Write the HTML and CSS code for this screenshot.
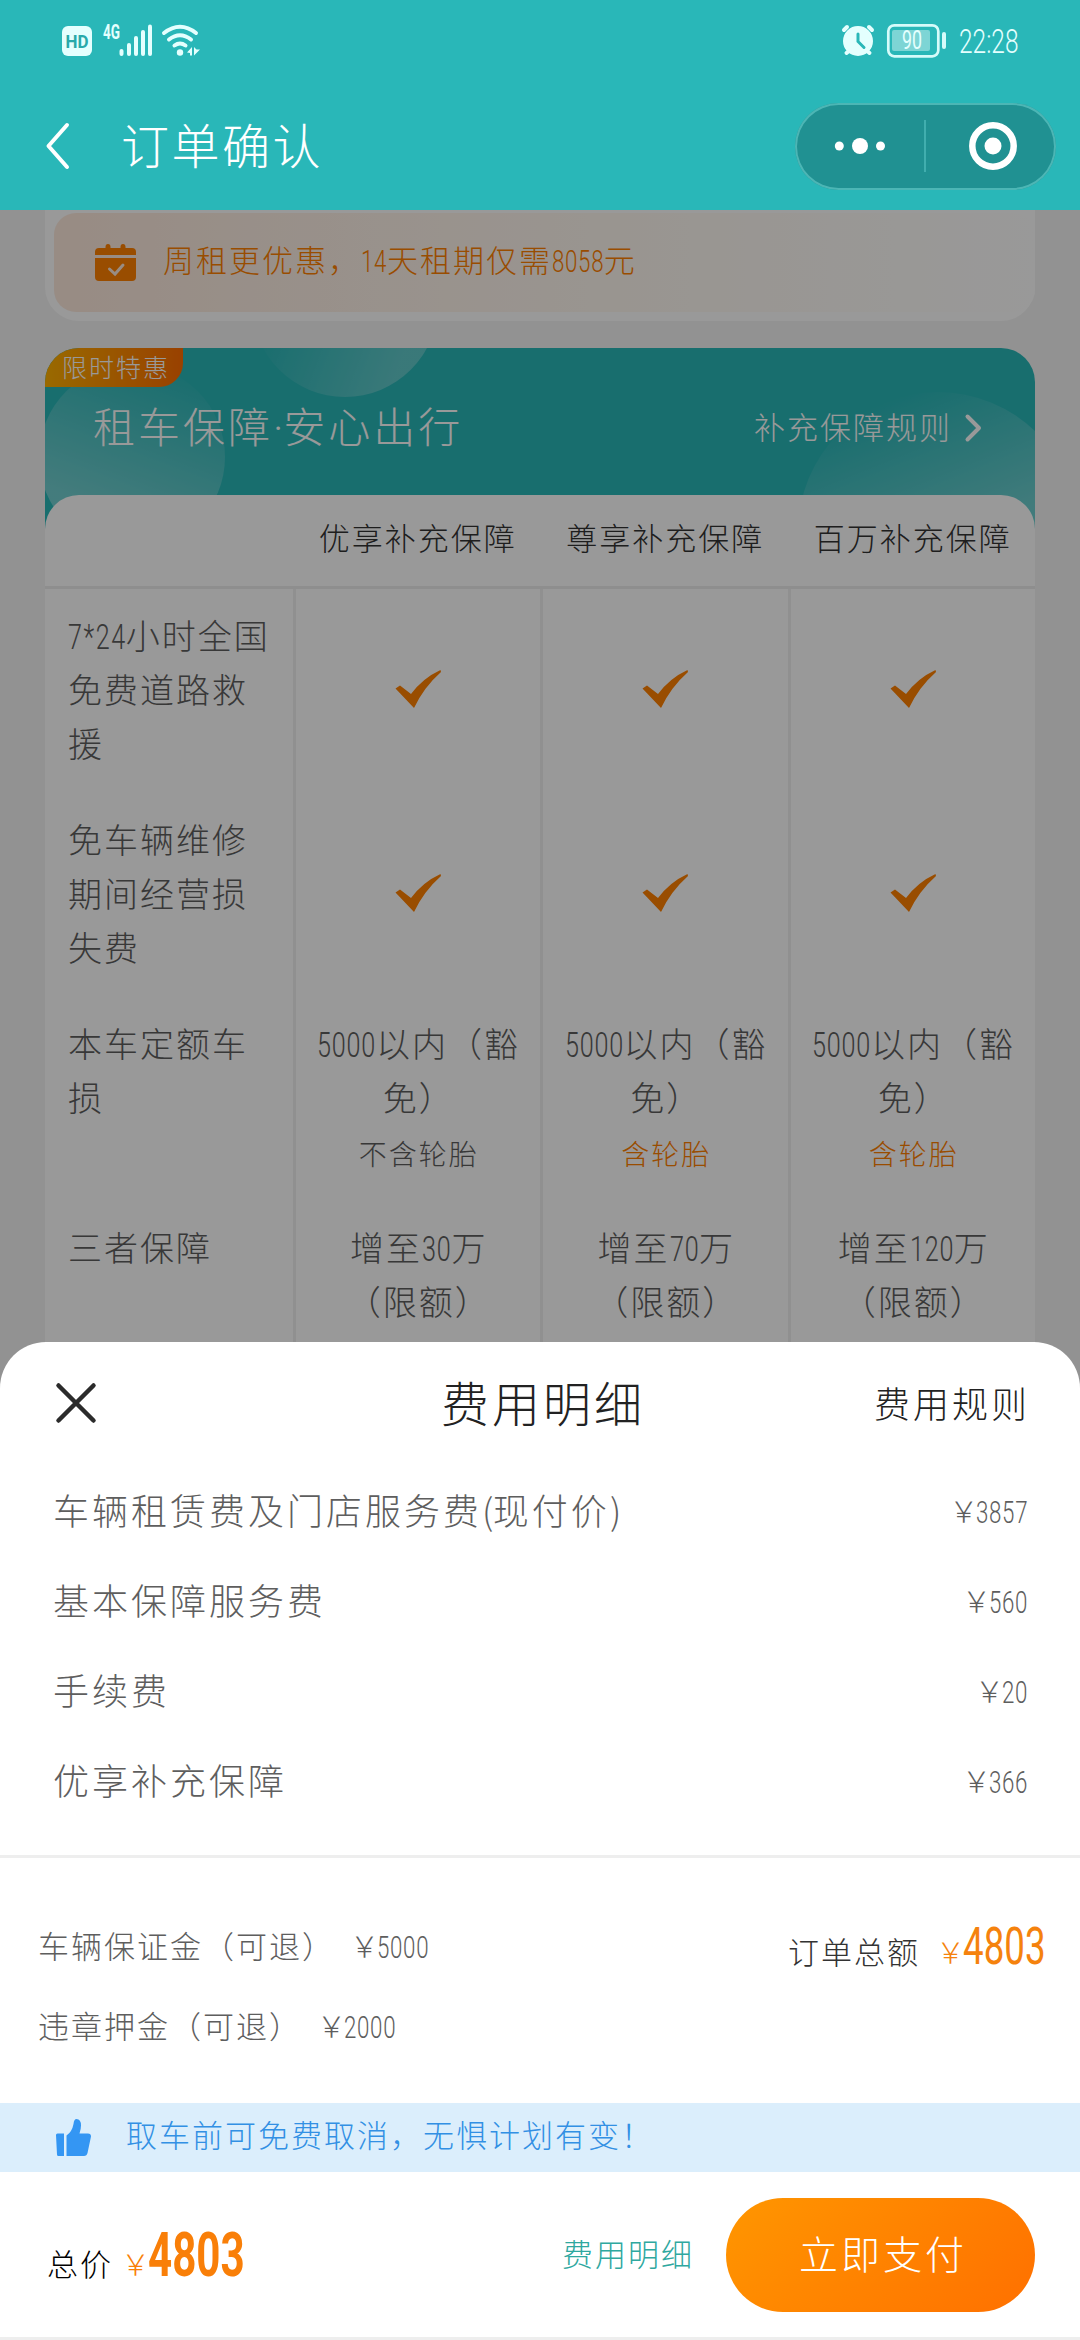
FILE: index.html
```html
<!DOCTYPE html>
<html lang="zh-CN">
<head>
<meta charset="utf-8">
<title>订单确认</title>
<link rel="stylesheet" href="styles.css">
</head>
<body>
<svg class="defs" width="0" height="0">
  <symbol id="tick" viewBox="0 0 46 38"><path d="M.5 18.500 5 15.500 16 24Q28 8 45.500 0L46 2Q29 17 19 38Z" fill="#ff8000"/></symbol>
</svg>
<div class="screen">
  <header class="top">
    <div class="status">
      <svg class="status-left" width="140" height="36" viewBox="60 22 140 36" fill="#e4fffe">
        <rect x="62" y="26" width="30" height="30" rx="6"/>
        <text x="65.500" y="48" class="hd" textLength="23" lengthAdjust="spacingAndGlyphs">HD</text>
        <text x="103" y="38.500" class="net" textLength="17" lengthAdjust="spacingAndGlyphs">4G</text>
        <rect x="119.500" y="49" width="4" height="7" rx="2"/>
        <rect x="127" y="43" width="4" height="13" rx="2"/>
        <rect x="134" y="36" width="4" height="20" rx="2"/>
        <rect x="141" y="30" width="4" height="26" rx="2"/>
        <rect x="148" y="24.500" width="4" height="31.500" rx="2"/>
        <g fill="none" stroke="#e4fffe" stroke-width="4" stroke-linecap="round">
          <path d="M164 33Q180 20.500 196 33M169 39.500Q180 31 191 39.500M174.500 45.500Q180 41.500 185.500 45.500"/>
        </g>
        <circle cx="180" cy="52.500" r="3.200"/>
        <path d="M187 52.500 192 47v8.500h-2V53zM194 47v8.500l6-6h-3.500z"/>
      </svg>
      <div class="status-right">
        <svg width="106" height="36" viewBox="838 22 106 36">
          <g fill="#e4fffe" stroke="#e4fffe" stroke-width="5" stroke-linecap="round">
            <circle cx="855" cy="41" r="12.500"/>
            <path d="M841 30 844 27M869 30 866 27M843.500 53 847 50M866.500 53 863 50" stroke-width="4"/>
          </g>
          <path d="M855 34v7.500l6 6" fill="none" stroke="#29b7b8" stroke-width="3" stroke-linecap="round"/>
          <rect x="885.300" y="25.300" width="50" height="31" rx="6" fill="none" stroke="#d5fbfa" stroke-width="2.700"/>
          <rect x="889" y="30" width="38" height="21" rx="2" fill="#7dd5d5"/>
          <rect x="939" y="32" width="4" height="17" rx="2" fill="#d5fbfa"/>
          <text x="899" y="49" class="bat" textLength="20" lengthAdjust="spacingAndGlyphs">90</text>
        </svg>
        <span class="time num n5">22:28</span>
      </div>
    </div>
    <div class="nav">
      <svg class="back" width="24" height="46" viewBox="0 0 24 46"><path d="M21 2 2.500 23 21 44" fill="none" stroke="#fff" stroke-width="4" stroke-linecap="round" stroke-linejoin="round"/></svg>
      <h1>订单确认</h1>
      <div class="capsule">
        <svg width="260" height="86" viewBox="795 103 260 86" fill="#fff">
          <circle cx="839.300" cy="146" r="4.500"/><circle cx="860" cy="146" r="8"/><circle cx="880.500" cy="146" r="4.500"/>
          <path d="M925 120v52" stroke="#4cb9b7" stroke-width="1.500"/>
          <circle cx="993" cy="146" r="20.700" fill="none" stroke="#fff" stroke-width="6.500"/>
          <circle cx="993" cy="146" r="8.500"/>
        </svg>
      </div>
    </div>
  </header>

  <main class="content">
    <section class="promo">
      <div class="promo-in">
        <svg width="41" height="38" viewBox="0 0 41 38"><path d="M0 11V8q0-4 4-4h6.500V3q0-3 2.500-3t2.500 3v1h10V3q0-3 2.500-3t2.500 3v1H37q4 0 4 4v3zM0 14h41v19q0 4-4 4H4q-4 0-4-4z" fill="#ff8000"/><path d="m14.500 25 5.500 5 8-9" fill="none" stroke="#fdeadb" stroke-width="3" stroke-linecap="round"/></svg>
        <p>周租更优惠，<span class="num n2">14</span>天租期仅需<span class="num n4">8058</span>元</p>
      </div>
    </section>

    <section class="cover">
      <svg class="bubbles" width="990" height="190" viewBox="45 348 990 190">
        <defs>
          <linearGradient id="b1" x1=".7" y1="0" x2=".4" y2=".8"><stop offset="0" stop-color="#fff" stop-opacity="0"/><stop offset="1" stop-color="#fff" stop-opacity=".34"/></linearGradient>
          <linearGradient id="b2" x1="0" y1=".5" x2=".8" y2=".8"><stop offset=".1" stop-color="#fff" stop-opacity="0"/><stop offset="1" stop-color="#fff" stop-opacity=".26"/></linearGradient>
          <linearGradient id="b3" x1=".4" y1="0" x2=".6" y2=".5"><stop offset="0" stop-color="#fff" stop-opacity="0"/><stop offset="1" stop-color="#fff" stop-opacity=".32"/></linearGradient>
        </defs>
        <circle cx="132" cy="457" r="93" fill="url(#b1)"/>
        <circle cx="345" cy="304" r="93" fill="url(#b2)"/>
        <circle cx="938" cy="532" r="140" fill="url(#b3)"/>
      </svg>
      <span class="badge">限时特惠</span>
      <div class="cover-head">
        <h2>租车保障<span class="dot">·</span>安心出行</h2>
        <a>补充保障规则<svg width="17" height="28" viewBox="0 0 17 28"><path d="M2.500 2.500 14 14 2.500 25.500" fill="none" stroke="#fff" stroke-width="4" stroke-linecap="round" stroke-linejoin="round"/></svg></a>
      </div>
      <div class="table">
        <div class="row head"><div></div><div>优享补充保障</div><div>尊享补充保障</div><div>百万补充保障</div></div>
        <div class="row">
          <div class="name"><span class="num n4 hours">7*24</span>小时全国<br>免费道路救<br>援</div>
          <div class="mid"><svg><use href="#tick"/></svg></div><div class="mid"><svg><use href="#tick"/></svg></div><div class="mid"><svg><use href="#tick"/></svg></div>
        </div>
        <div class="row">
          <div class="name">免车辆维修<br>期间经营损<br>失费</div>
          <div class="mid"><svg><use href="#tick"/></svg></div><div class="mid"><svg><use href="#tick"/></svg></div><div class="mid"><svg><use href="#tick"/></svg></div>
        </div>
        <div class="row">
          <div class="name">本车定额车<br>损</div>
          <div><span class="num n4">5000</span>以内（豁<br>免）<small>不含轮胎</small></div>
          <div><span class="num n4">5000</span>以内（豁<br>免）<small class="hot">含轮胎</small></div>
          <div><span class="num n4">5000</span>以内（豁<br>免）<small class="hot">含轮胎</small></div>
        </div>
        <div class="row">
          <div class="name">三者保障</div>
          <div>增至<span class="num n2">30</span>万<br>（限额）</div>
          <div>增至<span class="num n2">70</span>万<br>（限额）</div>
          <div>增至<span class="num n3">120</span>万<br>（限额）</div>
        </div>
      </div>
    </section>
  </main>

  <div class="mask"></div>

  <section class="sheet">
    <div class="sheet-head">
      <svg width="40" height="40" viewBox="0 0 40 40"><path d="M2.500 2.500 37.500 37.500M37.500 2.500 2.500 37.500" stroke="#2b2b2b" stroke-width="4.500" stroke-linecap="round"/></svg>
      <h2>费用明细</h2>
      <a>费用规则</a>
    </div>
    <ul class="fees">
      <li><span>车辆租赁费及门店服务费<i>(</i>现付价<i>)</i></span><b><span class="yen">￥</span><span class="num n4">3857</span></b></li>
      <li><span>基本保障服务费</span><b><span class="yen">￥</span><span class="num n3">560</span></b></li>
      <li><span>手续费</span><b><span class="yen">￥</span><span class="num n2">20</span></b></li>
      <li><span>优享补充保障</span><b><span class="yen">￥</span><span class="num n3">366</span></b></li>
    </ul>
    <div class="sums">
      <div class="deposits">
        <p>车辆保证金（可退）<b><span class="yen">￥</span><span class="num n4">5000</span></b></p>
        <p>违章押金（可退）<b><span class="yen">￥</span><span class="num n4">2000</span></b></p>
      </div>
      <p class="total">订单总额<b><span class="yen">￥</span><span class="num n4">4803</span></b></p>
    </div>
    <div class="notice">
      <svg width="35" height="37" viewBox="0 0 35 37" fill="#3496f3"><path d="M0 16q0-1.500 1.500-1.500H8V37H2.500Q1 37 1 35.500zM10.500 16.500Q16 13 17.500 5 18 0 20.500 0q4.500 0 4.500 6.500 0 3.500-1.500 8H32q3 0 3 3L31.500 34q-.7 3-3.500 3H10.500z"/></svg>
      <p>取车前可免费取消，无惧计划有变！</p>
    </div>
    <footer class="pay">
      <p class="sum">总价<b><span class="yen">￥</span><span class="num n4">4803</span></b></p>
      <a>费用明细</a>
      <button>立即支付</button>
    </footer>
  </section>
</div>
</body>
</html>
```
FILE: styles.css
```css
* { box-sizing: border-box; margin: 0; padding: 0; }
body { width: 1080px; font-family: "Noto Sans CJK SC", sans-serif; font-weight: 300; font-size: 31px; letter-spacing: 2px; line-height: 40px; color: #333; }
h1, h2, b { font-weight: 300; }
svg { display: block; flex: none; overflow: visible; }
i { font-style: normal; }
.defs { position: absolute; }
.screen { position: relative; width: 1080px; height: 2340px; overflow: hidden; background: #f4f4f4; }

/* condensed figures; the margin takes up the width the scaling frees */
.num { display: inline-block; font-family: Roboto, "Noto Sans CJK SC", sans-serif; font-weight: 300; letter-spacing: .03em; line-height: 1; transform: scaleX(.72); transform-origin: left; white-space: nowrap; }
.n2 { margin-right: -.333em; }
.n3 { margin-right: -.5em; }
.n4 { margin-right: -.666em; }
.n5 { margin-right: -.7em; }

/* top bar */
.top { height: 210px; background: #29b7b8; color: #fff; }
.status { height: 82px; display: flex; justify-content: space-between; padding: 22px 60px 0; }
.status-right { display: flex; gap: 12px; padding-right: 2px; }
.time { font-size: 34px; line-height: 39px; letter-spacing: 0; color: #e4fffe; }
.hd { font: 700 19px Roboto, sans-serif; letter-spacing: 0; fill: #29a9aa; }
.net { font: 700 20px Roboto, sans-serif; letter-spacing: 0; }
.bat { font: 400 25px Roboto, sans-serif; letter-spacing: 0; fill: #e4fffe; }
.nav { height: 128px; display: flex; align-items: center; padding: 0 24px 0 46px; }
.back { width: 24px; }
h1 { flex: 1; margin: -6px 0 0 51px; font-size: 48px; line-height: 60px; letter-spacing: 2.5px; }
.capsule { width: 261px; height: 87px; border-radius: 44px; background: #209192; box-shadow: inset 0 0 0 2px #4cb6b5; }

/* page under the mask */
.content { padding: 0 45px; }
.promo { height: 111px; padding: 3px 0 9px 9px; background: #fff; border-radius: 0 0 34px 34px; }
.promo-in { height: 99px; padding: 0 0 0 41px; display: flex; align-items: center; gap: 27px; border-radius: 22px; background: linear-gradient(90deg, #fde9dc, #fff5ec 40%, #fffaf3 65%, #fff); color: #ff8000; }
.promo-in p { margin-top: -7px; }
.promo-in .num { font-size: 31px; }
.cover { position: relative; margin-top: 27px; height: 1100px; border-radius: 34px 34px 0 0; overflow: hidden; background: #29b7b8; }
.bubbles { position: absolute; left: 0; top: 0; }
.badge { position: absolute; left: 0; top: 0; width: 138px; height: 39px; padding-left: 17px; font-size: 25px; line-height: 36px; color: #fff; background: linear-gradient(90deg, #ffb000, #ff6d00); border-radius: 0 0 24px 0; }
.cover-head { position: relative; height: 147px; padding: 13px 53px 0 48px; display: flex; align-items: center; justify-content: space-between; color: #fff; }
.cover-head h2 { font-size: 42px; letter-spacing: 3px; line-height: 50px; margin-top: -3px; }
.dot { font-family: Roboto, sans-serif; letter-spacing: 0; }
.cover-head a { display: flex; align-items: center; gap: 13px; margin-top: -4px; }
.cover-head a svg { margin-top: 4px; }
.table { position: relative; height: 953px; background: #fff; border-radius: 34px 34px 0 0; }
.row { display: grid; grid-template-columns: repeat(4, 247.5px); font-size: 34px; line-height: 54px; color: #5e5e5e; }
.row > div { padding: 19px 0 23px 2px; text-align: center; white-space: nowrap; border-left: 3px solid #f0f0f0; }
.row > div:first-child { border-left: 0; }
.row .name { padding-left: 23px; text-align: left; }
.row .num { font-size: 35px; }
.row .hours { letter-spacing: .06em; margin-right: -.68em; }
.row small { display: block; font-size: 28px; height: 54px; line-height: 58px; }
.row .hot { color: #ff8000; }
.head { height: 94px; border-bottom: 3px solid #ededed; font-size: 31px; color: #333; }
.head > div { border-left: 0; padding: 15px 0 0 3px; }
.row .mid { display: grid; place-items: center; padding: 0; }
.mid svg { width: 46px; height: 38px; margin-top: -5px; }
.mask { position: absolute; inset: 210px 0 0; background: rgba(0, 0, 0, .4); }

/* bottom sheet */
.sheet { position: absolute; left: 0; right: 0; bottom: 0; height: 998px; background: #fff; border-radius: 46px 46px 0 0; display: flex; flex-direction: column; }
.sheet-head { height: 122px; display: grid; grid-template-columns: 1fr auto 1fr; align-items: center; padding: 0 50px 0 56px; color: #222; }
.sheet-head h2 { font-size: 48px; letter-spacing: 3px; line-height: 60px; margin-top: -5px; }
.sheet-head a { justify-self: end; font-size: 36px; letter-spacing: 3px; margin-top: -3px; }
.fees { list-style: none; height: 394px; padding: 2px 52px 0 53px; border-bottom: 3px solid #eee; color: #5e5e5e; }
.fees li { height: 90px; display: flex; align-items: center; justify-content: space-between; font-size: 36px; letter-spacing: 3px; line-height: 90px; }
.fees li > span { margin-top: -4px; }
.fees li > b { margin-top: -2px; }
.fees i { letter-spacing: -.5px; }
b { white-space: nowrap; font-size: 31px; letter-spacing: 0; }
.yen { display: inline-block; width: 23px; font-size: 29px; text-indent: -4px; }
.sums { height: 245px; display: flex; justify-content: space-between; padding: 47px 35px 0 38px; }
.deposits { color: #5e5e5e; }
.deposits p { line-height: 79px; }
.deposits b { margin-left: 19px; }
.total { line-height: 79px; margin-top: 6px; }
.total b { margin-left: 20px; color: #f5820d; }
.total .num { font-size: 51px; font-weight: 400; letter-spacing: 0; margin-right: -.64em; }
.notice { height: 69px; display: flex; align-items: center; padding-left: 56px; gap: 35px; background: #dbeefc; color: #3290e4; }
.notice p { margin-top: -7px; }
.pay { height: 168px; border-bottom: 3px solid #eee; display: flex; align-items: center; padding: 0 45px 0 47px; }
.sum { flex: 1; color: #000; margin-top: 14px; line-height: 70px; }
.sum b { margin-left: 12px; color: #f97f08; }
.sum .num { font-size: 61px; font-weight: 700; letter-spacing: 0; transform: scaleX(.69); }
.pay a { color: #2fa89f; margin: -4px 32px 0 0; }
.pay button { width: 309px; height: 114px; border: 0; border-radius: 57px; padding: 0 0 5px 5px; font: 300 39px "Noto Sans CJK SC", sans-serif; letter-spacing: 3px; color: #fff; background: linear-gradient(135deg, #ff9600, #ff7000); }
```
